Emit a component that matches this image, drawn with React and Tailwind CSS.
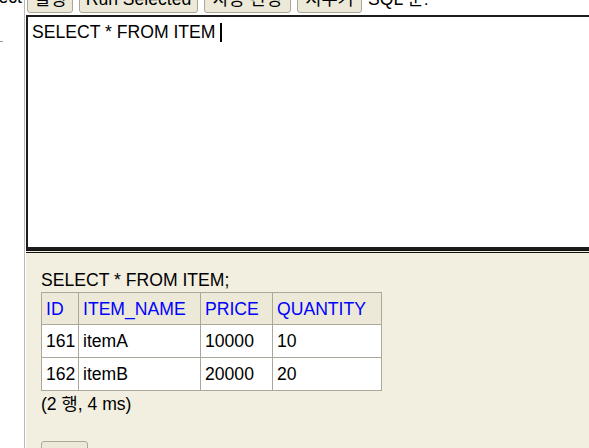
export default function App() {
  const font = { fontFamily: '"Liberation Sans", Arial, "Noto Sans CJK KR", sans-serif' };
  const rows = [
    ["161", "itemA", "10000", "10"],
    ["162", "itemB", "20000", "20"],
  ];
  return (
    <div className="flex h-[448px] w-[589px] overflow-hidden bg-white text-[17.6px] leading-[20px] text-black" style={font}>
      {/* left frame */}
      <div className="flex w-[25px] shrink-0 flex-col items-end overflow-hidden border-r border-[#b8b8b8] bg-white">
        <div className="-mt-[13px] mr-[2px] whitespace-nowrap">Auto select</div>
        <div className="mt-[34px] h-[1px] w-[3px] self-start bg-[#999]"></div>
      </div>
      {/* right frame */}
      <div className="flex min-w-0 flex-1 flex-col">
        {/* toolbar */}
        <div className="-mt-[16px] flex h-[31px] shrink-0 items-start gap-[6px] pl-[2px] whitespace-nowrap">
          <div className="flex h-[29px] w-[46px] items-center justify-center rounded-[3px] border border-[#aca899] bg-[#ece9d8]">실행</div>
          <div className="flex h-[29px] w-[119px] items-center justify-center rounded-[3px] border border-[#aca899] bg-[#ece9d8]">Run Selected</div>
          <div className="flex h-[29px] w-[87px] items-center justify-center rounded-[3px] border border-[#aca899] bg-[#ece9d8]">자동 완성</div>
          <div className="flex h-[29px] w-[65px] items-center justify-center rounded-[3px] border border-[#aca899] bg-[#ece9d8]">지우기</div>
          <div className="flex h-[29px] items-center">SQL 문:</div>
        </div>
        {/* sql editor */}
        <div className="ml-[1px] -mr-[4px] h-[235px] shrink-0 border-2 border-b-[3px] border-[#1c1c1c] bg-white pl-[4px] pt-[5px]">
          <div className="flex items-center whitespace-nowrap">
            <span>SELECT * FROM ITEM</span>
            <span className="ml-[5px] inline-block h-[19px] w-[2px] bg-black"></span>
          </div>
        </div>
        {/* result frame */}
        <div className="ml-[1px] flex-1 border-t-[3px] border-double border-[#111] bg-[#f2efe0] pl-[15px] pt-[17px]">
          <div className="whitespace-nowrap">SELECT * FROM ITEM;</div>
          <table className="mt-[2px] border-collapse border border-[#aca899]">
            <thead>
              <tr className="bg-[#ece9d8] text-[#0000ff]">
                <th className="h-[32px] w-[37px] border border-[#aca899] pl-[4px] text-left font-normal">ID</th>
                <th className="h-[32px] w-[122px] border border-[#aca899] pl-[4px] text-left font-normal">ITEM_NAME</th>
                <th className="h-[32px] w-[72px] border border-[#aca899] pl-[4px] text-left font-normal">PRICE</th>
                <th className="h-[32px] w-[109px] border border-[#aca899] pl-[4px] text-left font-normal">QUANTITY</th>
              </tr>
            </thead>
            <tbody>
              {rows.map((r) => (
                <tr key={r[0]} className="bg-white">
                  {r.map((c, i) => (
                    <td key={i} className="h-[33px] border border-[#aca899] pl-[4px] pr-[2px]">{c}</td>
                  ))}
                </tr>
              ))}
            </tbody>
          </table>
          <div className="mt-[3px] whitespace-nowrap">(2 행, 4 ms)</div>
          <div className="mt-[27px] h-[30px] w-[47px] rounded-[3px] border border-[#aca899] bg-[#ece9d8]"></div>
        </div>
      </div>
    </div>
  );
}
